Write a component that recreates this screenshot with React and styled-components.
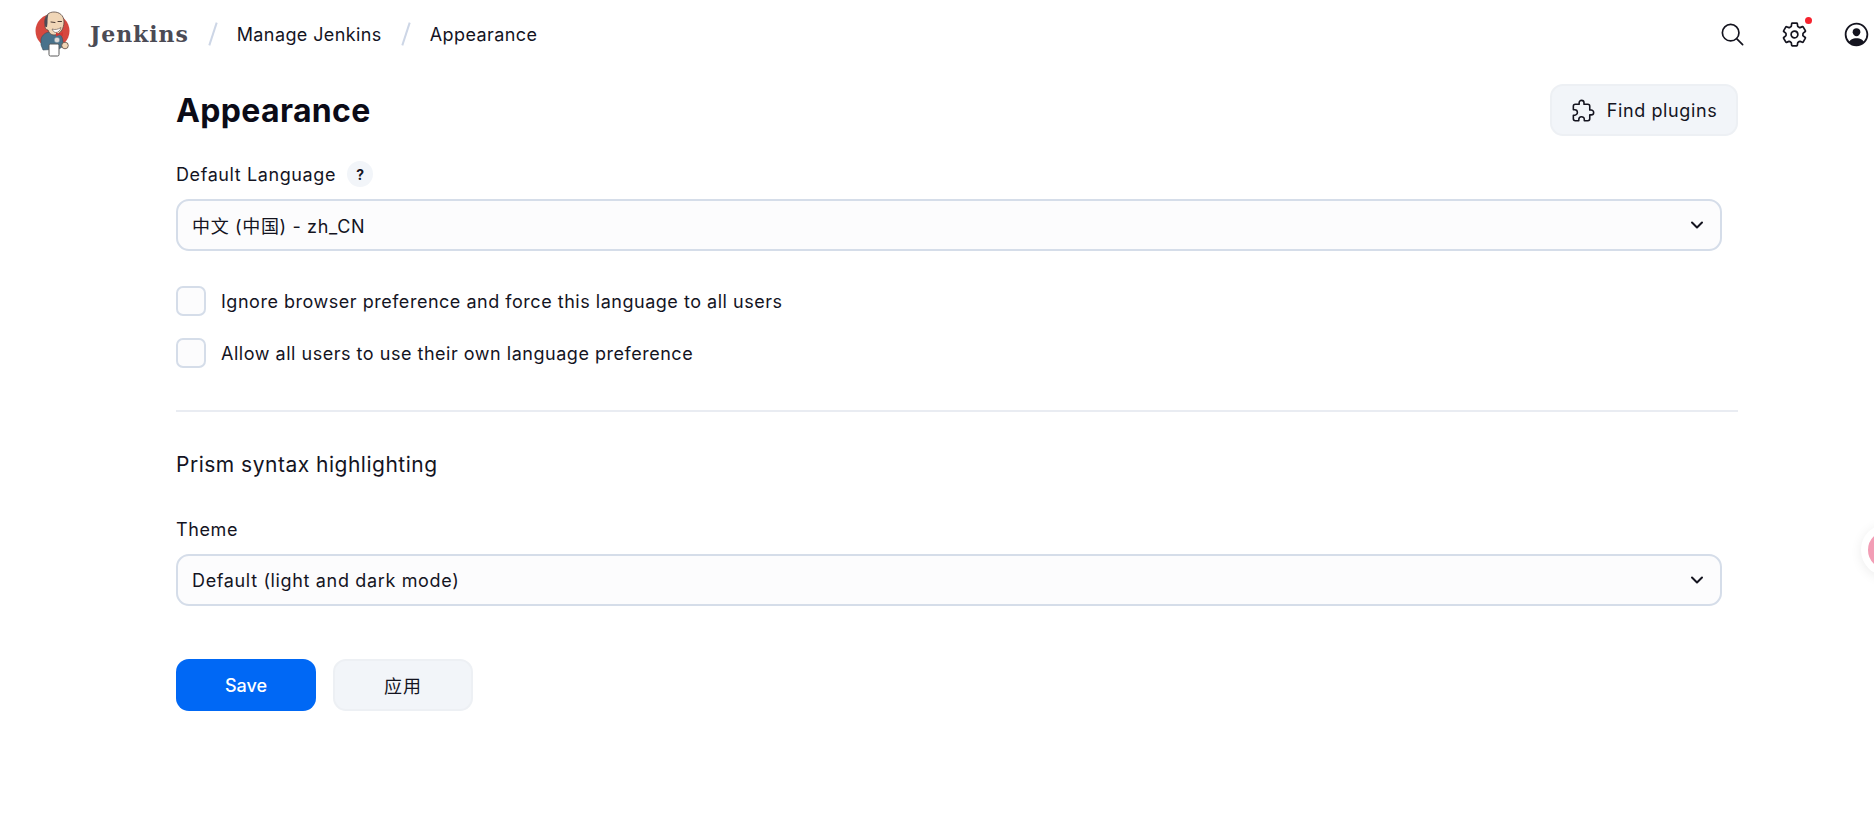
import React from "react";
import styled, { createGlobalStyle } from "styled-components";
import { IoExtensionPuzzleOutline, IoSearchOutline, IoSettingsOutline, IoPersonCircleOutline } from "react-icons/io5";

const GlobalStyle = createGlobalStyle`
    html, body {
        margin: 0;
        padding: 0;
        background: #fff;
        overflow: hidden;
    }
    body {
        font-family: Inter, "Noto Sans CJK SC", sans-serif;
        color: #14141f;
    }
`

const Page = styled.div`
    position: relative;
    width: 1874px;
    height: 825px;
    overflow: hidden;
`

const Header = styled.header`
    display: flex;
    align-items: center;
    justify-content: space-between;
    height: 68px;
    padding: 0 5px 0 33px;
`

const Breadcrumbs = styled.nav`
    display: flex;
    align-items: center;
`

const Brand = styled.a`
    display: flex;
    align-items: center;
    gap: 19px;
    font-family: "DejaVu Serif", serif;
    font-weight: 700;
    font-size: 22px;
    letter-spacing: 0.9px;
    color: #4b4b55;
`

const Crumb = styled.a`
    font-size: 18px;
    letter-spacing: 0.4px;
    color: #14141f;
`

const Slash = styled.span`
    width: 2px;
    height: 24px;
    margin: 0 23px;
    background: #cdd6e6;
    transform: rotate(18deg);
`

const Actions = styled.div`
    display: flex;
    align-items: center;
    gap: 36px;
`

const ActionIcon = styled.span`
    position: relative;
    display: flex;
    width: 26px;
    height: 26px;
    align-items: center;
    justify-content: center;
    color: #14141f;

    svg {
        flex-shrink: 0;
    }
`

const Dot = styled.span`
    position: absolute;
    top: -4px;
    right: -5px;
    width: 7px;
    height: 7px;
    border-radius: 50%;
    background: #f6222e;
`

const Main = styled.main`
    width: 1562px;
    margin-left: 176px;
`

const TitleRow = styled.div`
    display: flex;
    align-items: center;
    justify-content: space-between;
    margin-top: 16px;
`

const Title = styled.h1`
    margin: 0;
    padding-top: 2px;
    font-size: 32px;
    line-height: 50px;
    font-weight: 700;
    letter-spacing: 0.35px;
    color: #0b0b17;
`

const Button = styled.button`
    display: flex;
    align-items: center;
    justify-content: center;
    gap: 11px;
    box-sizing: border-box;
    width: ${(p) => p.$width}px;
    height: 52px;
    border-radius: 13px;
    border: ${(p) => (p.$primary ? "none" : "2px solid #edf0f4")};
    background: ${(p) => (p.$primary ? "#0068f5" : "#f2f5f9")};
    color: ${(p) => (p.$primary ? "#fff" : "#14141f")};
    font-family: inherit;
    font-size: 18px;
    letter-spacing: ${(p) => p.$tracking || 0}px;
    font-weight: ${(p) => (p.$primary ? 500 : 400)};
`

const FieldLabel = styled.label`
    display: flex;
    align-items: center;
    gap: 11px;
    height: 26px;
    font-size: 18px;
    letter-spacing: 0.6px;
    color: #14141f;
    margin-top: ${(p) => p.$top}px;
`

const HelpBadge = styled.span`
    display: flex;
    align-items: center;
    justify-content: center;
    width: 26px;
    height: 26px;
    border-radius: 50%;
    background: #f2f5f9;
    font-size: 14px;
    font-weight: 700;
    letter-spacing: 0;
`

const SelectBox = styled.div`
    display: flex;
    align-items: center;
    justify-content: space-between;
    box-sizing: border-box;
    width: 1546px;
    height: 52px;
    margin-top: ${(p) => p.$top}px;
    padding: 0 16px 0 14px;
    border: 2px solid #d5dde9;
    border-radius: 13px;
    background: #fcfcfd;
    font-size: 18px;
    letter-spacing: 0.65px;
    color: #14141f;
`

const CheckRow = styled.label`
    display: flex;
    align-items: center;
    gap: 15px;
    height: 30px;
    margin-top: ${(p) => p.$top}px;
    font-size: 18px;
    letter-spacing: 0.52px;
    color: #14141f;
`

const CheckBox = styled.span`
    box-sizing: border-box;
    width: 30px;
    height: 30px;
    border: 2px solid #d5dde9;
    border-radius: 7px;
    background: #fcfcfd;
`

const Divider = styled.hr`
    height: 2px;
    margin: 42px 0 0;
    border: 0;
    background: #e9ecf2;
`

const SectionTitle = styled.h2`
    margin: 39px 0 0;
    font-size: 21px;
    line-height: 28px;
    font-weight: 400;
    letter-spacing: 0.5px;
    color: #14141f;
`

const ButtonRow = styled.div`
    display: flex;
    gap: 17px;
    margin-top: 53px;
`

const FloatingBall = styled.span`
    position: absolute;
    left: 1861px;
    top: 524px;
    box-sizing: border-box;
    width: 52px;
    height: 52px;
    border: 7px solid #fff;
    border-radius: 50%;
    background: #f29db5;
    box-shadow: 0 2px 12px rgba(0, 0, 0, 0.08);
`

const JenkinsLogo = () => (
    <svg width="38" height="46" viewBox="0 0 38 46">
        <circle cx="19.500" cy="20" r="17" fill="#d6483f" />
        <path d="M8 28c1-4 5-7 9-7l8 1c3 1 5 5 5 10l-1 4-3 2-16 1-2-5z" fill="#49728b" stroke="#3a4f5c" strokeWidth="0.6" />
        <path d="M12 10c0-6 4-9 9-9s10 3 10 10c0 3-1 6-2 8-2 3-5 5-8 5-3 0-5-2-6-5-2 0-3-2-3-4 0-2 0-4 0-5z" fill="#f0d6b7" stroke="#5a4a42" strokeWidth="0.8" />
        <path d="M12.500 16c-2-5-1-10 3-13-1 3-1 6-1 9l-.5 4z" fill="#4b4b55" />
        <path d="M19 18c3 1 6 .5 9-1.500-.5 3-3 5-5 5s-3-1.500-4-3.500z" fill="#fff" stroke="#5a4a42" strokeWidth="0.6" />
        <path d="M18 11l4 .5M25 10.500l3.500 0" stroke="#4b3b34" strokeWidth="1" strokeLinecap="round" />
        <path d="M23 21.500l3.500 1.500 3.500-2 0 4-3.500-1-3.500 1.500z" fill="#d33833" />
        <circle cx="24" cy="29" r="2.800" fill="#dcd9d8" stroke="#49728b" strokeWidth="0.5" />
        <rect x="16" y="33" width="10" height="12" rx="1.500" fill="#fff" stroke="#5a5a5a" strokeWidth="1" />
        <circle cx="32" cy="34.500" r="3.300" fill="#f0d6b7" stroke="#5a4a42" strokeWidth="0.8" />
    </svg>
)

const Chevron = () => (
    <svg width="14" height="14" viewBox="0 0 14 14" fill="none" stroke="#14141f" strokeWidth="2" strokeLinecap="round" strokeLinejoin="round">
        <path d="M2 4.500l5 5 5-5" />
    </svg>
)

const App = () => {
    return (
        <Page>
            <GlobalStyle />
            <Header>
                <Breadcrumbs>
                    <Brand>
                        <JenkinsLogo />
                        Jenkins
                    </Brand>
                    <Slash />
                    <Crumb>Manage Jenkins</Crumb>
                    <Slash />
                    <Crumb>Appearance</Crumb>
                </Breadcrumbs>
                <Actions>
                    <ActionIcon><IoSearchOutline size={27} /></ActionIcon>
                    <ActionIcon><IoSettingsOutline size={27} /><Dot /></ActionIcon>
                    <ActionIcon><IoPersonCircleOutline size={29} /></ActionIcon>
                </Actions>
            </Header>
            <Main>
                <TitleRow>
                    <Title>Appearance</Title>
                    <Button $width={188} $tracking={0.6}><IoExtensionPuzzleOutline size={25} />Find plugins</Button>
                </TitleRow>
                <FieldLabel $top={25}>Default Language <HelpBadge>?</HelpBadge></FieldLabel>
                <SelectBox $top={12}>中文 (中国) - zh_CN <Chevron /></SelectBox>
                <CheckRow $top={35}><CheckBox />Ignore browser preference and force this language to all users</CheckRow>
                <CheckRow $top={22}><CheckBox />Allow all users to use their own language preference</CheckRow>
                <Divider />
                <SectionTitle>Prism syntax highlighting</SectionTitle>
                <FieldLabel $top={37}>Theme</FieldLabel>
                <SelectBox $top={12}>Default (light and dark mode) <Chevron /></SelectBox>
                <ButtonRow>
                    <Button $primary $width={140}>Save</Button>
                    <Button $width={140} $tracking={1}>应用</Button>
                </ButtonRow>
            </Main>
            <FloatingBall />
        </Page>
    )
}

export default App
